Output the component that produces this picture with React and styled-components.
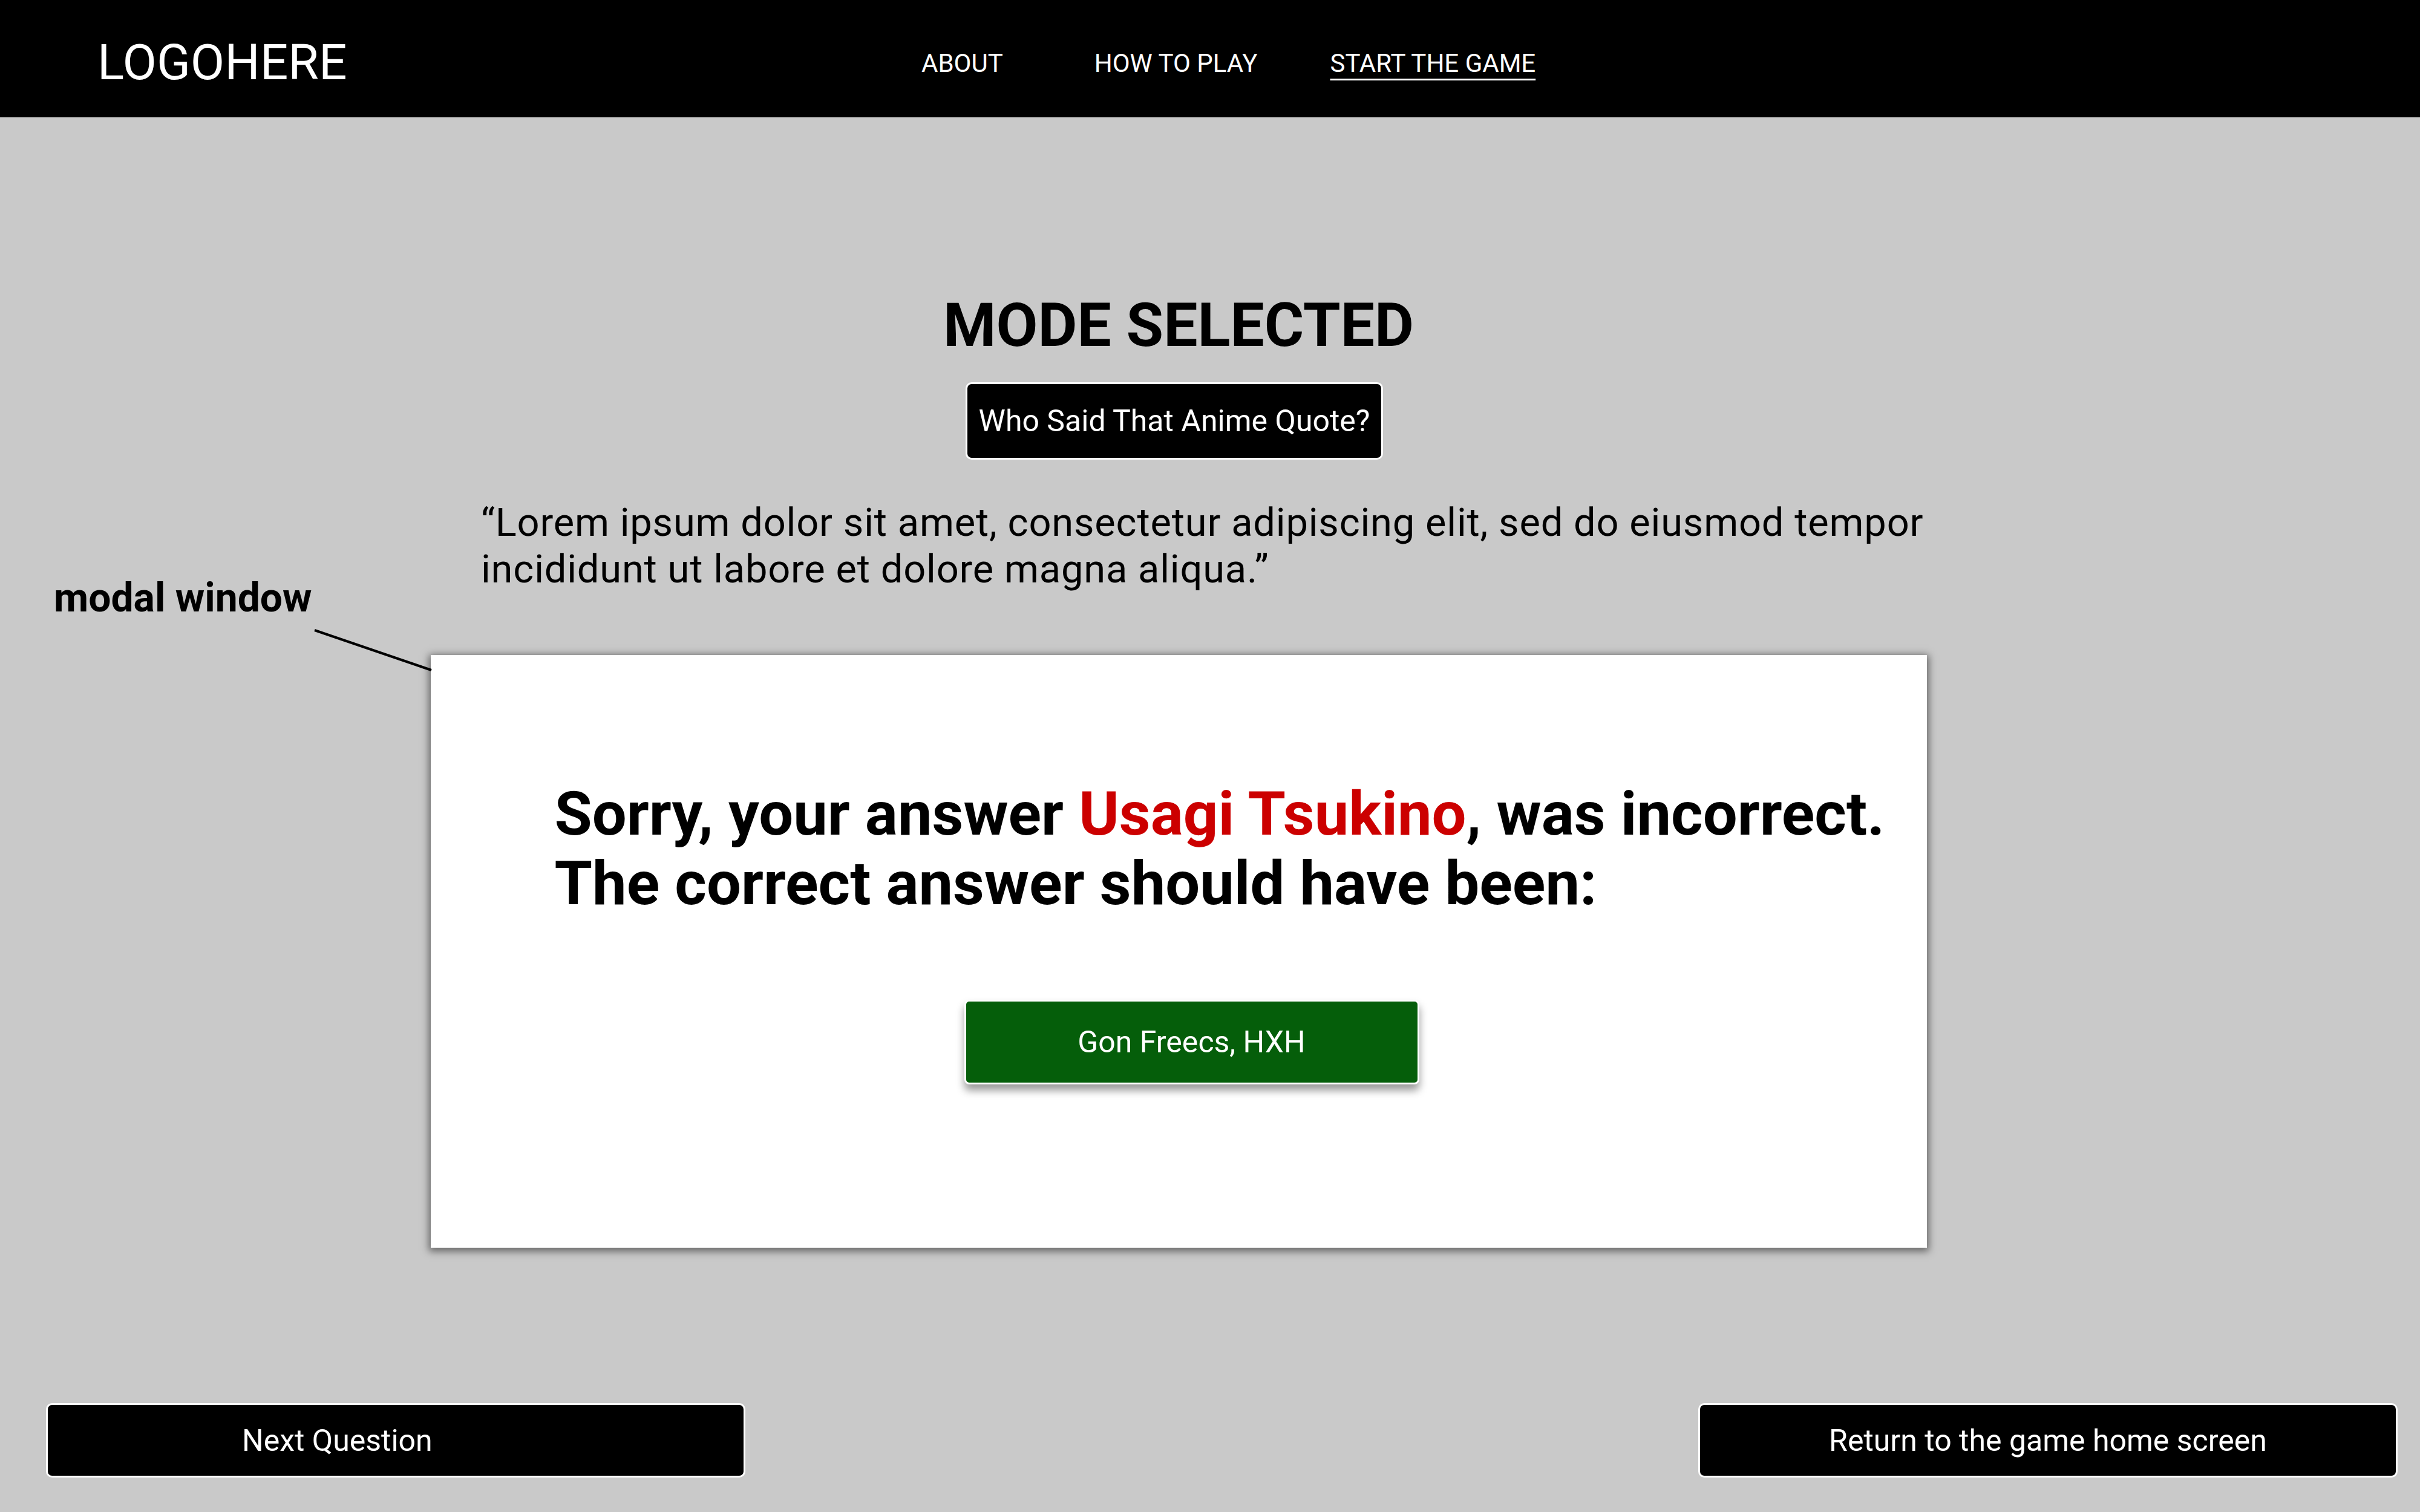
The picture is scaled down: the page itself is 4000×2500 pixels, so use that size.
import React from 'react'
import styled, {createGlobalStyle} from 'styled-components'

const GlobalStyle = createGlobalStyle`
  html, body {
    margin: 0;
    padding: 0;
    background: #c9c9c9;
  }

  body {
    font-family: Roboto, 'Liberation Sans', sans-serif;
    color: #000;
  }

  * {
    box-sizing: border-box;
  }
`

const Page = styled.div`
  position: relative;
  display: flex;
  flex-direction: column;
  min-height: 100vh;
  background: #c9c9c9;
`

const Header = styled.header`
  display: grid;
  grid-template-columns: 1362px auto;
  align-items: start;
  height: 194px;
  padding-left: 161px;
  background: #000;
  color: #fff;
`

const Logo = styled.div`
  margin-top: 62px;
  font-size: 82px;
  line-height: 1;
  font-weight: 400;
`

const Nav = styled.nav`
  display: flex;
  margin-top: 84px;
`

const NavItem = styled.a`
  margin-left: ${p => p.$offset || 0}px;
  font-size: 42px;
  line-height: 1;
  color: #fff;
  text-decoration: ${p => (p.$active ? 'underline' : 'none')};
  text-decoration-thickness: 3px;
  text-underline-offset: 11px;
  cursor: pointer;
`

const Main = styled.main`
  display: flex;
  flex-direction: column;
  align-items: center;
  padding-right: 104px;
`

const Heading = styled.h1`
  margin: 294px 0 0;
  font-size: 100px;
  line-height: 1;
  font-weight: 700;
`

const ModeBadge = styled.div`
  display: flex;
  align-items: center;
  justify-content: center;
  width: 690px;
  height: 128px;
  margin: 44px 14px 0 0;
  border: 3px solid #fff;
  border-radius: 10px;
  background: #000;
  color: #fff;
  font-size: 50px;
`

const Quote = styled.p`
  align-self: flex-start;
  width: 2480px;
  margin: 66px 0 0 795px;
  font-size: 65px;
  line-height: 77px;
  letter-spacing: 0.8px;
`

const Modal = styled.section`
  display: flex;
  flex-direction: column;
  width: 2473px;
  margin-top: 103px;
  padding: 205px 0 270px 205px;
  background: #fff;
  box-shadow: 0 3px 12px 3px rgba(0, 0, 0, 0.5);
`

const Verdict = styled.h2`
  max-width: 2260px;
  margin: 0;
  font-size: 101px;
  line-height: 115px;
  font-weight: 700;
`

const WrongAnswer = styled.span`
  color: #cc0000;
`

const AnswerButton = styled.button`
  display: flex;
  align-items: center;
  justify-content: center;
  width: 752px;
  height: 140px;
  margin: 135px 0 0 677px;
  border: 3px solid #fff;
  border-radius: 8px;
  background: #055e0a;
  box-shadow: 0 10px 14px rgba(0, 0, 0, 0.4);
  color: #fff;
  font-family: inherit;
  font-size: 50px;
`

const Footer = styled.footer`
  display: flex;
  justify-content: space-between;
  margin-top: auto;
  padding: 0 37px 57px 76px;
`

const FooterButton = styled.button`
  display: flex;
  align-items: center;
  justify-content: ${p => (p.$indent ? 'flex-start' : 'center')};
  width: 1156px;
  height: 123px;
  padding: 0 0 0 ${p => p.$indent || 0}px;
  border: 3px solid #fff;
  border-radius: 10px;
  background: #000;
  color: #fff;
  font-family: inherit;
  font-size: 50px;
`

const NoteLabel = styled.div`
  position: absolute;
  left: 89px;
  top: 956px;
  font-size: 66px;
  line-height: 1;
  font-weight: 700;
`

const NoteLine = styled.svg`
  position: absolute;
  left: 516px;
  top: 1036px;
`

export default function App() {
  return (
    <>
      <GlobalStyle />
      <Page>
        <Header>
          <Logo>LOGOHERE</Logo>
          <Nav>
            <NavItem>ABOUT</NavItem>
            <NavItem $offset={151}>HOW TO PLAY</NavItem>
            <NavItem $offset={120} $active>
              START THE GAME
            </NavItem>
          </Nav>
        </Header>

        <Main>
          <Heading>MODE SELECTED</Heading>
          <ModeBadge>Who Said That Anime Quote?</ModeBadge>
          <Quote>
            “Lorem ipsum dolor sit amet, consectetur adipiscing elit, sed do
            eiusmod tempor incididunt ut labore et dolore magna aliqua.”
          </Quote>

          <Modal>
            <Verdict>
              Sorry, your answer <WrongAnswer>Usagi Tsukino</WrongAnswer>, was
              incorrect. The correct answer should have been:
            </Verdict>
            <AnswerButton>Gon Freecs, HXH</AnswerButton>
          </Modal>
        </Main>

        <Footer>
          <FooterButton $indent={321}>Next Question</FooterButton>
          <FooterButton>Return to the game home screen</FooterButton>
        </Footer>

        <NoteLabel>modal window</NoteLabel>
        <NoteLine width="200" height="76" viewBox="0 0 200 76">
          <line x1="4" y1="6" x2="197" y2="72" stroke="#000" strokeWidth="4" />
        </NoteLine>
      </Page>
    </>
  )
}
